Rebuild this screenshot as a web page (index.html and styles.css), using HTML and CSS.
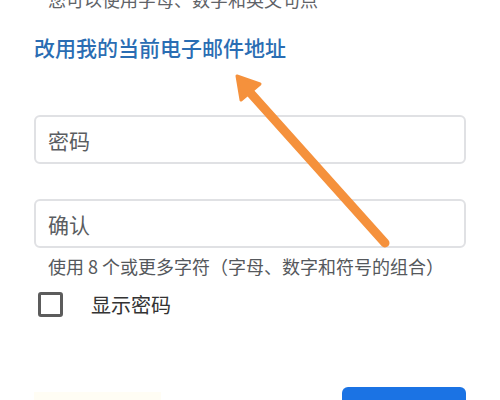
FILE: index.html
```html
<!DOCTYPE html>
<html lang="zh-CN">
<head>
    <meta charset="UTF-8">
    <meta name="viewport" content="width=device-width, initial-scale=1.0">
    <title>密码</title>
    <link rel="stylesheet" href="styles.css">
</head>
<body>
    <div class="form">
        <p class="hint top-hint">您可以使用字母、数字和英文句点</p>
        <a class="switch-link" href="#">改用我的当前电子邮件地址</a>

        <div class="field first">
            <input type="password" placeholder="密码">
        </div>
        <div class="field second">
            <input type="password" placeholder="确认">
        </div>
        <p class="hint rule">使用 8 个或更多字符（字母、数字和符号的组合）</p>

        <label class="show-pass">
            <span class="box"></span>
            <span>显示密码</span>
        </label>

        <div class="actions">
            <span class="ghost"></span>
            <button class="next-btn"></button>
        </div>
    </div>

    <svg class="arrow" width="500" height="400" viewBox="0 0 500 400">
        <line x1="385" y1="243" x2="246" y2="88" stroke="#f5913c" stroke-width="9" stroke-linecap="round"/>
        <polygon points="237,76 260,84 241,100" fill="#f5913c" stroke="#f5913c" stroke-width="3" stroke-linejoin="round"/>
    </svg>
</body>
</html>
```
FILE: styles.css
```css
* {
    margin: 0;
    padding: 0;
    box-sizing: border-box;
    font-family: 'Noto Sans CJK SC', 'Noto Sans', sans-serif;
}

body {
    background: #fff;
    width: 500px;
    height: 400px;
    overflow: hidden;
    position: relative;
}

.form {
    padding: 0 34px;
    display: flex;
    flex-direction: column;
}

.hint {
    color: #5f6368;
    font-size: 17px;
    line-height: 24px;
}

.top-hint {
    margin-top: -13px;
    padding-left: 14px;
    font-size: 18px;
}

.switch-link {
    margin-top: 23px;
    color: #2a6db3;
    font-size: 21px;
    font-weight: 500;
    line-height: 26px;
    text-decoration: none;
}

.field input {
    width: 100%;
    height: 49px;
    border: 2px solid #e0e1e4;
    border-radius: 6px;
    padding-left: 12px;
    font-size: 21px;
    color: #333;
    outline: none;
}

.field input::placeholder {
    color: #5a5d61;
}

.field.first {
    margin-top: 55px;
}

.field.second {
    margin-top: 35px;
}

.rule {
    margin-top: 6px;
    padding-left: 14px;
    font-size: 18px;
    color: #55585c;
}

.show-pass {
    margin-top: 12px;
    display: flex;
    align-items: center;
    gap: 28px;
    padding-left: 4px;
    font-size: 20px;
    color: #333;
}

.box {
    width: 25px;
    height: 25px;
    border: 3px solid #5c5c5c;
    border-radius: 3px;
}

.actions {
    margin-top: 68px;
    display: flex;
    justify-content: space-between;
    align-items: flex-start;
}

.ghost {
    margin-top: 5px;
    width: 127px;
    height: 20px;
    background: #fffdf4;
}

.next-btn {
    width: 124px;
    height: 40px;
    background: #1b73e4;
    border: none;
    border-radius: 6px;
}

.arrow {
    position: absolute;
    left: 0;
    top: 0;
    pointer-events: none;
}
```
